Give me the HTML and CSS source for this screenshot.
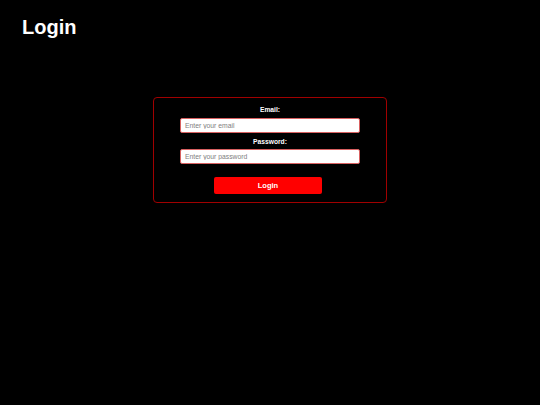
FILE: index.html
```html
<!DOCTYPE html>
<html>
<head>
<meta charset="utf-8">
<link rel="stylesheet" href="styles.css">
</head>
<body>
<h1 class="title">Login</h1>
<main class="wrap">
  <form class="card">
    <label class="label" for="email">Email:</label>
    <input class="field" id="email" type="email" placeholder="Enter your email">
    <label class="label label-2" for="password">Password:</label>
    <input class="field" id="password" type="password" placeholder="Enter your password">
    <button class="btn" type="button">Login</button>
  </form>
</main>
</body>
</html>
```
FILE: styles.css
```css
html, body {
  margin: 0;
  padding: 0;
  background: #000;
  color: #fff;
  font-family: "Liberation Sans", Arial, sans-serif;
}
.title {
  margin: 0;
  padding: 16px 0 0 22px;
  font-size: 20px;
  line-height: 23px;
  font-weight: bold;
}
.wrap {
  display: flex;
  justify-content: center;
  padding-top: 58px;
}
.card {
  width: 232px;
  border: 1px solid #a00000;
  border-radius: 4px;
  padding: 7px 0 8px;
  display: flex;
  flex-direction: column;
  align-items: center;
}
.label {
  font-size: 6.7px;
  line-height: 9px;
  font-weight: bold;
  margin-bottom: 4px;
}
.label-2 {
  margin-top: 4px;
  margin-bottom: 3px;
}
.field {
  box-sizing: border-box;
  width: 180px;
  height: 15px;
  margin: 0;
  padding: 0 4px;
  border: 1px solid #d86060;
  border-radius: 2px;
  background: #fff;
  font-family: "Liberation Sans", Arial, sans-serif;
  font-size: 6.8px;
  outline: none;
}
.field::placeholder {
  color: #808080;
}
.btn {
  box-sizing: border-box;
  margin-top: 13px;
  margin-right: 4px;
  width: 108px;
  height: 17px;
  border: none;
  border-radius: 2px;
  background: #ff0000;
  color: #fff;
  font-family: "Liberation Sans", Arial, sans-serif;
  font-size: 7.5px;
  font-weight: bold;
  padding: 0;
}
```
